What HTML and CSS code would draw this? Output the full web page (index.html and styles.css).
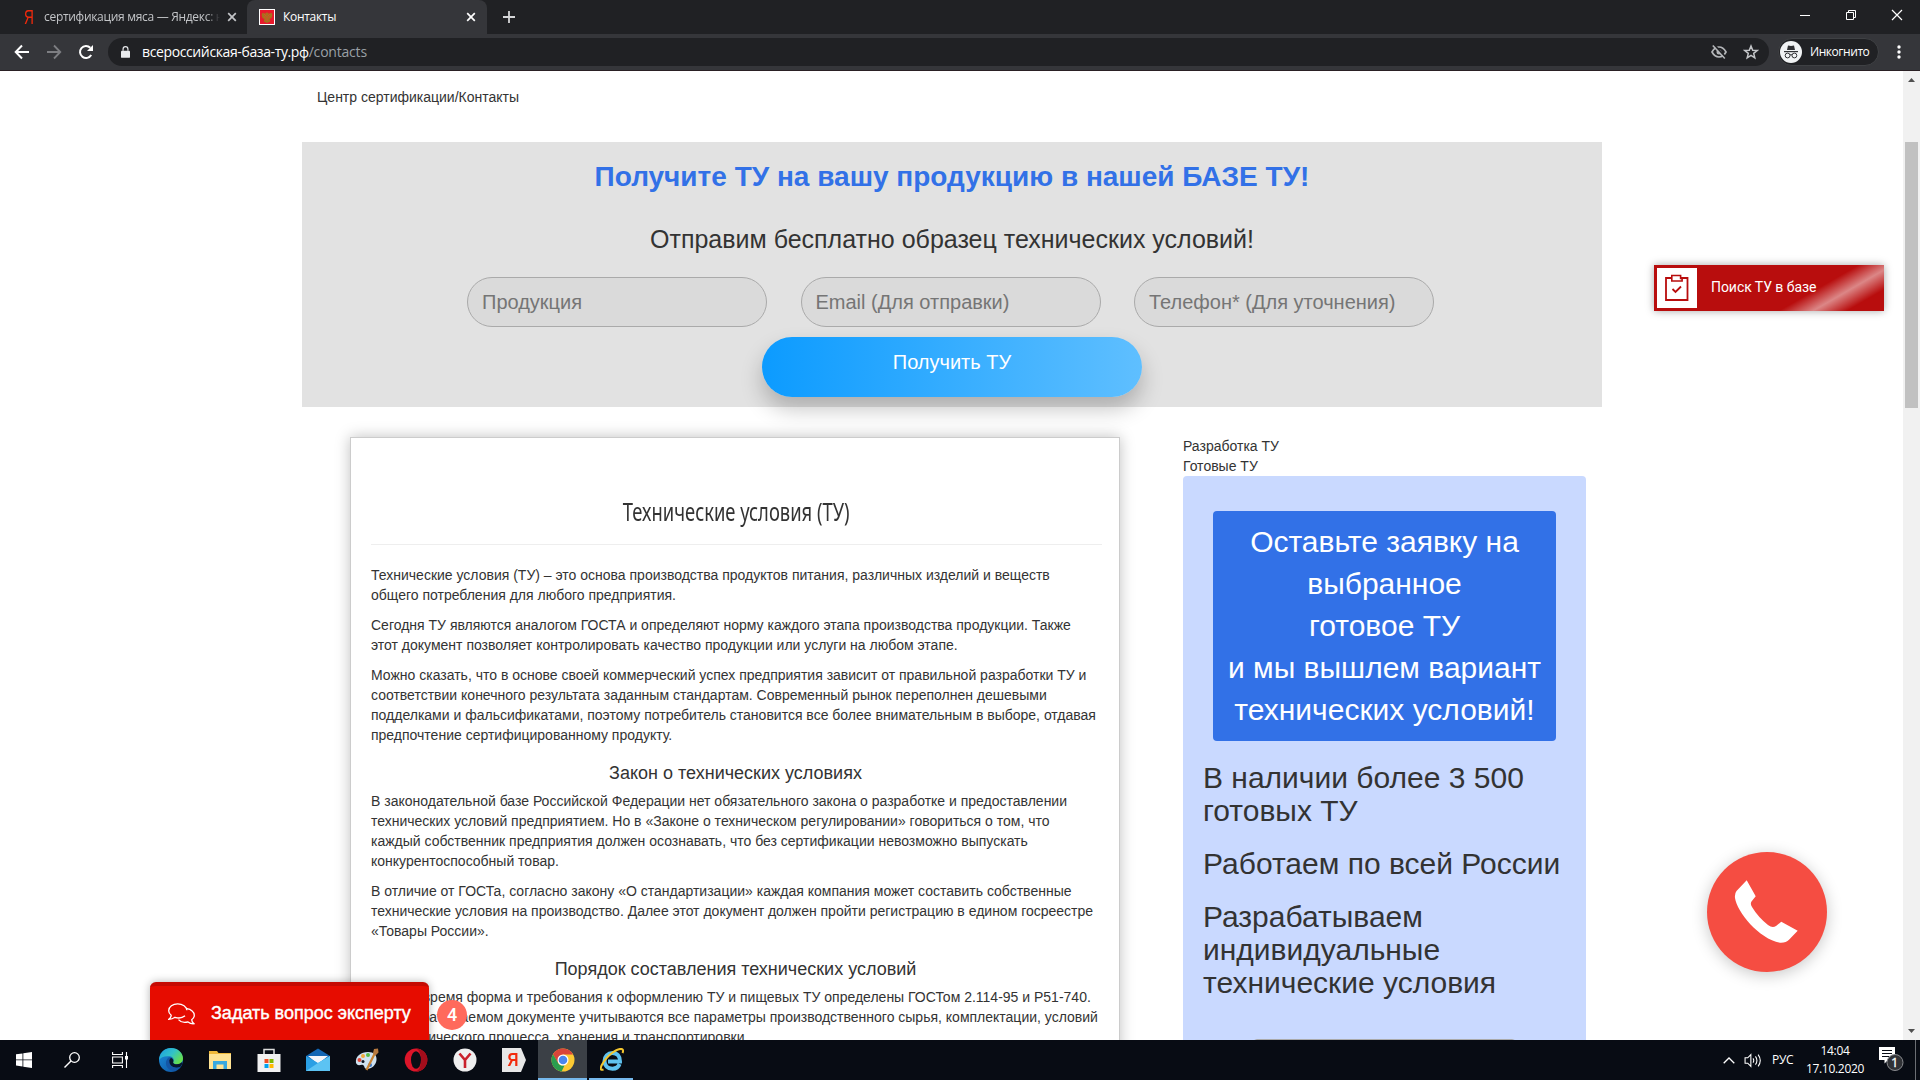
FILE: index.html
```html
<!DOCTYPE html>
<html lang="ru">
<head>
<meta charset="utf-8">
<title>Контакты</title>
<link rel="stylesheet" href="styles.css">
</head>
<body>
<div class="screen">
  <header class="tabstrip">
    <div class="tab tab-idle">
      <span class="fav-ya">Я</span>
      <span class="tab-title fade">сертификация мяса — Яндекс: н</span>
      <svg class="tab-x" viewBox="0 0 10 10"><path d="M1.2 1.2l7.6 7.6M8.8 1.2L1.2 8.8" stroke="#c3c5c8" stroke-width="1.7"/></svg>
    </div>
    <div class="tab tab-active">
      <svg class="fav-rf" viewBox="0 0 16 16"><path fill="#fff" d="M0 0h16v16H0z"/><path fill="#e8192c" d="M1 1h14v14H1z"/><path fill="#a8701c" d="M8 3l1.2 1.4L12.8 4l.6 2-.9 3-2 1 .8 2.4L8 14l-3.300-1.600.8-2.400-2-1-.9-3 .6-2 3.600.4z"/><path d="M5 5l2 2M11 5L9 7M8 7v5M5 8h1.500M9.500 8H11" stroke="#d5502a"/></svg>
      <span class="tab-title">Контакты</span>
      <svg class="tab-x" viewBox="0 0 10 10"><path d="M1.200 1.200l7.600 7.600M8.800 1.200L1.200 8.800" stroke="#fff" stroke-width="1.700"/></svg>
    </div>
    <svg class="newtab" viewBox="0 0 12 12"><path d="M6 0v12M0 6h12" stroke="#d5d6d8" stroke-width="1.800"/></svg>
    <div class="winbtns">
      <svg viewBox="0 0 12 12"><path d="M1 6.500h10" stroke="#fff"/></svg>
      <svg viewBox="0 0 12 12"><path d="M1.500 3.500h7v7h-7zM3.500 3.500v-2h7v7h-2" fill="none" stroke="#fff"/></svg>
      <svg viewBox="0 0 12 12"><path d="M1 1l10 10M11 1L1 11" stroke="#fff" stroke-width="1.200"/></svg>
    </div>
  </header>
  <div class="toolbar">
    <svg class="nav" viewBox="0 0 16 16"><path d="M15 8H2M8 1.500L1.700 8 8 14.500" fill="none" stroke="#fff" stroke-width="2"/></svg>
    <svg class="nav" viewBox="0 0 16 16"><path d="M1 8h13M8 1.500L14.300 8 8 14.500" fill="none" stroke="#7d7e82" stroke-width="1.800"/></svg>
    <svg class="nav" viewBox="0 0 16 16"><path d="M13.200 11A6 6 0 1 1 12.300 3.800" fill="none" stroke="#fff" stroke-width="2"/><path d="M15 1v6H9z" fill="#fff"/></svg>
    <div class="omnibox">
      <svg class="lock" viewBox="0 0 10 13"><path d="M1 5h8a1 1 0 0 1 1 1v6a1 1 0 0 1-1 1H1a1 1 0 0 1-1-1V6a1 1 0 0 1 1-1z" fill="#e8eaed"/><path d="M2.300 5V3.300a2.700 2.700 0 0 1 5.400 0V5" fill="none" stroke="#e8eaed" stroke-width="1.300"/></svg>
      <span class="url">всероссийская-база-ту.рф</span><span class="path">/contacts</span>
      <svg class="omni-ico first" viewBox="0 0 16 16"><path d="M1 8c2-3.600 4.500-5 7-5s5 1.400 7 5c-2 3.600-4.500 5-7 5s-5-1.400-7-5z" fill="none" stroke="#b4b6b9" stroke-width="1.700"/><circle cx="8" cy="8" r="2.500" fill="#b4b6b9"/><path d="M3 .8l12 13" stroke="#202124" stroke-width="2"/><path d="M1.800 1.500l12 13" stroke="#b4b6b9" stroke-width="1.600"/></svg>
      <svg class="omni-ico" viewBox="0 0 16 16"><path d="M8 2l1.700 4.200 4.500.3-3.500 2.900 1.100 4.400L8 11.400l-3.800 2.400 1.100-4.400L1.800 6.500l4.500-.3z" fill="none" stroke="#c4c6c9" stroke-width="1.500"/></svg>
    </div>
    <div class="chip">
      <svg viewBox="0 0 22 22"><circle cx="11" cy="11" r="11" fill="#f1f3f4"/><path d="M8 4.500l3 .5 3-.5 1 4.500H7z" fill="#303134"/><path d="M4 10.600h14" stroke="#303134" stroke-width="1.200"/><circle cx="7.600" cy="14.500" r="2.400" fill="none" stroke="#303134"/><circle cx="14.400" cy="14.500" r="2.400" fill="none" stroke="#303134"/><path d="M10 14q1-.8 2 0" fill="none" stroke="#303134"/></svg>
      <span>Инкогнито</span>
    </div>
    <svg class="dots" viewBox="0 0 4 14"><circle cx="2" cy="2" r="1.700" fill="#fff"/><circle cx="2" cy="7" r="1.700" fill="#fff"/><circle cx="2" cy="12" r="1.700" fill="#fff"/></svg>
  </div>

  <div class="viewport">
    <main class="page">
      <div class="crumbs">Центр сертификации/Контакты</div>
      <section class="lead">
        <h2>Получите ТУ на вашу продукцию в нашей БАЗЕ ТУ!</h2>
        <h3>Отправим бесплатно образец технических условий!</h3>
        <div class="fields">
          <div class="field">Продукция</div>
          <div class="field">Email (Для отправки)</div>
          <div class="field">Телефон* (Для уточнения)</div>
        </div>
        <div class="send">Получить ТУ</div>
      </section>
      <div class="columns">
        <article class="article">
          <h1><span>Технические условия (ТУ)</span></h1>
          <p>Технические условия (ТУ) – это основа производства продуктов питания, различных изделий и веществ<br>общего потребления для любого предприятия.</p>
          <p>Сегодня ТУ являются аналогом ГОСТА и определяют норму каждого этапа производства продукции. Также<br>этот документ позволяет контролировать качество продукции или услуги на любом этапе.</p>
          <p>Можно сказать, что в основе своей коммерческий успех предприятия зависит от правильной разработки ТУ и соответствии конечного результата заданным стандартам. Современный рынок переполнен дешевыми подделками и фальсификатами, поэтому потребитель становится все более внимательным в выборе, отдавая предпочтение сертифицированному продукту.</p>
          <h4>Закон о технических условиях</h4>
          <p>В законодательной базе Российской Федерации нет обязательного закона о разработке и предоставлении технических условий предприятием. Но в «Законе о техническом регулировании» говориться о том, что каждый собственник предприятия должен осознавать, что без сертификации невозможно выпускать конкурентоспособный товар.</p>
          <p>В отличие от ГОСТа, согласно закону «О стандартизации» каждая компания может составить собственные технические условия на производство. Далее этот документ должен пройти регистрацию в едином госреестре «Товары России».</p>
          <h4>Порядок составления технических условий</h4>
          <p>В наше время форма и требования к оформлению ТУ и пищевых ТУ определены ГОСТом 2.114-95 и Р51-740.<br>В разрабатываемом документе учитываются все параметры производственного сырья, комплектации, условий<br>технологического процесса, хранения и транспортировки.</p>
        </article>
        <aside class="side">
          <div>Разработка ТУ</div>
          <div>Готовые ТУ</div>
          <div class="promo">
            <div class="promo-head">Оставьте заявку на выбранное<br>готовое ТУ<br>и мы вышлем вариант технических условий!</div>
            <p>В наличии более 3 500 готовых ТУ</p>
            <p>Работаем по всей России</p>
            <p>Разрабатываем индивидуальные технические условия</p>
            <div class="promo-input"></div>
          </div>
        </aside>
      </div>
    </main>
    <div class="scrollbar">
      <svg viewBox="0 0 7 4"><path d="M0 4L3.500 0 7 4z" fill="#505050"/></svg>
      <div class="thumb"></div>
      <svg class="down" viewBox="0 0 7 4"><path d="M0 0l3.500 4L7 0z" fill="#505050"/></svg>
    </div>

    <div class="find">
      <div class="find-ico"><svg viewBox="0 0 26 28"><path d="M7 4H2v22h21.500V4H17" fill="none" stroke="#b80d0d" stroke-width="1.800"/><path d="M7.800 7V1.500h8.800v3h1.500V7z" fill="none" stroke="#b80d0d" stroke-width="1.600"/><path d="M8.500 15l3 3 5.500-5.500" fill="none" stroke="#b80d0d" stroke-width="1.800"/></svg></div>
      <span>Поиск ТУ в базе</span>
    </div>
    <div class="call"><svg viewBox="0 0 120 120"><path fill="#fff" d="M39.700 28.300L48.700 44.300 44.500 49.500Q43 52 45 55Q51 65 61 73Q65.500 76.500 69 74L74.300 69.700 90.700 78.700 82 87.800Q79 91 73 90.700C52 87 30 60 28 46Q27.500 41.500 29.500 39z"/></svg></div>
    <div class="chat">
      <svg viewBox="0 0 27 22"><path d="M17 12.700C14.500 14.800 10.500 15.500 7 14.300 5.300 15.600 3 16.300.8 16.300 2.300 15 3.200 13.600 3.200 12.200 1.500 10.900.7 9.300.7 7.700.7 3.800 4.800.8 9.700.8s9 2.900 9.200 6.500" fill="none" stroke="#fff" stroke-width="1.300"/><path d="M19 5.700c4 .6 7.300 3.300 7.300 6.500 0 1.800-1 3.400-2.600 4.600 0 1.500.8 2.700 2.300 3.900-2.200.2-4.200-.4-6-1.800-3.600 1-7.500 0-9.500-2.300" fill="none" stroke="#fff" stroke-width="1.300"/></svg>
      <span>Задать вопрос эксперту</span>
    </div>
    <div class="badge">4</div>
  </div>

  <footer class="taskbar">
    <div class="tb sys"><svg viewBox="0 0 16 16"><path fill="#fff" d="M0 2.300l6.500-.9v6H0zM7.300 1.300L16 0v7.400H7.300zM0 8.300h6.500v6.200L0 13.600zM7.300 8.300H16V16l-8.700-1.300z"/></svg></div>
    <div class="tb sys"><svg viewBox="0 0 16 16"><circle cx="10.500" cy="5.500" r="4.800" fill="none" stroke="#fff" stroke-width="1.300"/><path d="M7 9L.5 15.500" stroke="#fff" stroke-width="1.400"/></svg></div>
    <div class="tb sys"><svg viewBox="0 0 16 16"><path d="M.6 0v2.500h9.800V0M.6 16v-2.500h9.800V16M.6 5h9.800v6H.6zM14.500 0v16" fill="none" stroke="#fff" stroke-width="1.100"/><path fill="#fff" d="M13 4h3v3.500h-3z"/></svg></div>
    <div class="tb"><svg viewBox="0 0 24 24"><defs><linearGradient id="eg" x2="1" y2=".6"><stop offset="0" stop-color="#1b9de2"/><stop offset=".55" stop-color="#32c2c8"/><stop offset="1" stop-color="#66e04c"/></linearGradient><linearGradient id="eb" y2="1"><stop stop-color="#1c8fdc"/><stop offset="1" stop-color="#0c4f9e"/></linearGradient></defs><circle cx="12" cy="12" r="12" fill="url(#eb)"/><path d="M.3 10C1.500 4 6 0 12 0c7 0 12 5 12 10.300 0 4-3 6-6 6-2.500 0-4.500-.8-4-2 1.600-2.300.4-5.500-3.500-6C5.500 7.800 1.500 9 .3 12z" fill="url(#eg)"/><path d="M14.200 14.200c-.4 1.200 1.500 2.100 3.800 2.100 1.800 0 3.500-.8 4.800-2l.7 1.200-2.300 3.600C17 21 10 19 9.500 14c0-2 1-3.500 2.500-4.300 2.300 1 2.900 3 2.200 4.500z" fill="#07182e"/><path d="M9 10c-4 4-2 11.500 4.500 12.800 3.500 0 6.500-1.700 8-4-4 2-10 .5-11-4.300Q10 11 12 9.500 10 9 9 10z" fill="#1456a5"/></svg></div>
    <div class="tb"><svg viewBox="0 0 24 24"><path fill="#f0b93a" d="M1 3h8l1.500 2H23v3H1z"/><path fill="#ffe394" d="M1 6h22v15H1z"/><path fill="#38a9e0" d="M5 13h14v8h-3.500v-4.500h-7V21H5z"/></svg></div>
    <div class="tb"><svg viewBox="0 0 24 24"><path d="M7 7V1.500h10V7" fill="none" stroke="#ddd" stroke-width="1.500"/><path fill="#f1f1f1" d="M.5 6h23v18H.500z"/><path fill="#f25022" d="M7.500 11h4v4h-4z"/><path fill="#7fba00" d="M12.500 11h4v4h-4z"/><path fill="#00a4ef" d="M7.500 16h4v4h-4z"/><path fill="#ffb900" d="M12.500 16h4v4h-4z"/></svg></div>
    <div class="tb"><svg viewBox="0 0 24 24"><path fill="#1266b4" d="M0 8l12-7.500L24 8v8H0z"/><path fill="#f3f6fa" d="M2 8h20l-10 8z"/><path fill="#2a9fe4" d="M0 8l12 7 12-7v15H0z"/><path fill="#5cc3f3" d="M0 23l12-8 12-7v15z"/></svg></div>
    <div class="tb"><svg viewBox="0 0 24 24"><path fill="#cfe2f0" d="M1 15C0 8 6 4 13 4c6 0 9 3 8.500 8-.4 5-5 9-9.500 9-3 0-2-3-4-4s-5 2-7-2z"/><circle cx="4.500" cy="12" r="2" fill="#e0483a"/><circle cx="8" cy="8" r="2" fill="#f0a83b"/><circle cx="13" cy="7" r="2" fill="#58b947"/><circle cx="8" cy="13.500" r="1.500" fill="#0d1520"/><circle cx="15" cy="17" r="2" fill="#3c78c8"/><path d="M11.500 22L20 5" stroke="#c98434" stroke-width="2.200"/><path fill="#b5793f" d="M18 5l1-4 4-.5.5 4-3 3z"/></svg></div>
    <div class="tb"><svg viewBox="0 0 24 24"><ellipse cx="12" cy="12" rx="11.300" ry="11.500" fill="#dc1529"/><path d="M12 .5a11.400 11.500 0 0 1 0 23q5-2 5-11.500T12 .500z" fill="#a40d1b"/><ellipse cx="12" cy="12" rx="5" ry="8.800" fill="#0a0e15"/></svg></div>
    <div class="tb"><svg viewBox="0 0 24 24"><circle cx="12" cy="12" r="11.500" fill="#efefef"/><path d="M6.500 5.500L12 12l5.500-6.500M12 12v8" fill="none" stroke="#c9202b" stroke-width="2.600"/></svg></div>
    <div class="tb"><div class="ya-tile"><svg viewBox="0 0 24 24"><path fill="#e7e7e7" d="M0 0h19l5 12-5 12H0z"/></svg><span>Я</span></div></div>
    <div class="tb on"><svg viewBox="0 0 24 24"><circle cx="12" cy="12" r="11.500" fill="#fbc933"/><path fill="#d9453a" d="M2 6.300A11.500 11.500 0 0 1 22 6.500L12 6.600 6.800 15z"/><path fill="#2a9e4f" d="M2 6.300l5.100 8.600c1.500 2.500 4 2.900 6.500 2.400l-3 6.200A11.500 11.500 0 0 1 2 6.300z"/><circle cx="12" cy="12" r="5.500" fill="#fff"/><circle cx="12" cy="12" r="4.300" fill="#4a86ee"/></svg></div>
    <div class="tb open"><svg viewBox="0 0 24 24"><path d="M19.500 16c-1 3-3.500 4.700-7 4.700-5 0-8-3.300-8-7.700s3.200-8 8-8 7.600 3.300 7.500 8.500H8" fill="none" stroke="#5fc3f0" stroke-width="4"/><path d="M3.500 21.500C-3 24 3 12 12 5 19-.4 25-.5 22.500 5" fill="none" stroke="#f3c62f" stroke-width="2"/></svg></div>
    <div class="tray">
      <svg class="chev" viewBox="0 0 12 7"><path d="M.7 6.300L6 1l5.300 5.300" fill="none" stroke="#fff" stroke-width="1.300"/></svg>
      <svg class="vol" viewBox="0 0 16 14"><path d="M.6 4.500h2.500L6 1.500v11l-2.900-3H.6z" fill="none" stroke="#fff"/><path d="M8 5q1.400 2 0 4M10.300 3.200q2.700 3.800 0 7.600M12.800 1.500q4 5.500 0 11" fill="none" stroke="#fff"/></svg>
      <span class="lang">РУС</span>
      <div class="clock"><span>14:04</span><span>17.10.2020</span></div>
      <div class="note"><svg viewBox="0 0 25 25"><path fill="#fff" d="M0 0h16v13H9l-3.500 3.500V13H0z"/><path d="M3 3.500h10M3 6.500h10M3 9.500h7" stroke="#0a0e15"/><circle cx="16" cy="15.500" r="8" fill="#303236" stroke="#8a8c90"/></svg><span>1</span></div>
      <i class="peek"></i>
    </div>
  </footer>
</div>
</body>
</html>
```
FILE: styles.css
```css
* { box-sizing: border-box; }
body { margin: 0; font: 14px/20px "Liberation Sans", Arial, sans-serif; color: #333; background: #fff; }
svg { display: block; flex: none; }
.screen { width: 1920px; height: 1080px; overflow: hidden; display: flex; flex-direction: column; }

/* browser chrome */
.tabstrip { height: 34px; flex: none; background: #202124; display: flex; align-items: center; font: 12px/16px "Open Sans", sans-serif; letter-spacing: -.3px; }
.tab { height: 34px; display: flex; align-items: center; }
.tab-idle { width: 247px; padding-left: 22px; color: #c3c5c8; }
.tab-active { width: 240px; padding-left: 12px; background: #35363a; color: #fff; border-radius: 8px 8px 0 0; }
.fav-ya { width: 12px; color: #f22a0c; font: 21px/20px "Liberation Sans", sans-serif; transform: scaleX(.65); margin-right: 10px; }
.fav-rf { width: 16px; height: 16px; margin-right: 8px; }
.tab-title { width: 183px; white-space: nowrap; overflow: hidden; }
.tab-title.fade { width: 176px; margin-right: 7px; -webkit-mask-image: linear-gradient(90deg, #000 92%, transparent 100%); mask-image: linear-gradient(90deg, #000 92%, transparent 100%); }
.tab-x { width: 10px; height: 10px; }
.newtab { width: 12px; height: 12px; margin-left: 16px; }
.winbtns { margin-left: auto; display: flex; gap: 34px; padding-right: 17px; padding-bottom: 5px; }
.winbtns svg { width: 12px; height: 12px; }
.toolbar { height: 37px; flex: none; background: #35363a; border-bottom: 1px solid #2a2024; display: flex; align-items: center; padding-left: 14px; }
.nav { width: 16px; height: 16px; margin-right: 16px; }
.omnibox { width: 1661px; height: 28px; margin-left: -2px; border-radius: 14px; background: #202124; display: flex; align-items: center; padding-left: 13px; font: 14px/20px "Open Sans", sans-serif; letter-spacing: -.38px; color: #fff; }
.lock { width: 9px; height: 12px; margin-right: 12px; }
.path { color: #9aa0a6; letter-spacing: -.2px; }
.omni-ico { width: 16px; height: 16px; margin-right: 10px; }
.omni-ico.first { margin-left: auto; margin-right: 16px; }
.chip { width: 101px; height: 28px; margin-left: 9px; border-radius: 14px; background: #202124; border: 1px solid #3f4144; display: flex; align-items: center; padding-left: 1px; gap: 8px; color: #fff; font: 12px/16px "Open Sans", sans-serif; letter-spacing: -.45px; }
.chip svg { width: 22px; height: 22px; }
.dots { width: 4px; height: 14px; margin-left: 18px; }

/* page */
.viewport { position: relative; height: 969px; flex: none; display: flex; overflow: hidden; }
.page { width: 1903px; padding: 16px 301px 0 302px; }
.crumbs { padding-left: 15px; height: 55px; }
.lead { height: 265px; background: #e2e2e2; display: flex; flex-direction: column; align-items: center; padding-top: 19px; }
.lead h2 { margin: 0; font-size: 28px; line-height: 32px; color: #3271e7; }
.lead h3 { margin: 33px 0 0; font-size: 25px; line-height: 26px; font-weight: 400; height: 51px; }
.fields { width: 967px; display: flex; justify-content: space-between; margin-right: 3px; }
.field { width: 300px; height: 50px; border: 1px solid #aaa; border-radius: 25px; background: #dadada; padding-left: 14px; font-size: 20px; line-height: 48px; color: #757575; }
.send { width: 380px; height: 60px; margin-top: 10px; flex: none; border-radius: 30px; background: linear-gradient(90deg, #0c9bff, #5fbfff); box-shadow: 0 12px 22px rgba(0,0,0,.23); color: #fff; font-size: 20px; line-height: 50px; text-align: center; }
.columns { display: flex; align-items: flex-start; padding-left: 48px; margin-top: 30px; }
.article { width: 770px; height: 760px; flex: none; border: 1px solid #ccc; box-shadow: 0 0 14px rgba(0,0,0,.25); background: #fff; padding: 57px 17px 0 20px; }
.article h1 { margin: 0 0 20px; height: 50px; border-bottom: 1px solid #eee; font: 25px/32px "Noto Sans", sans-serif; text-align: center; white-space: nowrap; }
.article h1 span { display: inline-block; transform: scaleX(.735); }
p { margin: 0 0 10px; }
h4 { margin: 18px 0 8px; padding-right: 2px; font-size: 18px; line-height: 20px; font-weight: 400; text-align: center; }
.side { width: 403px; flex: none; margin-left: 63px; margin-top: -1px; }
.promo { height: 700px; border-radius: 4px; background: #c9d9ff; padding: 35px 20px 0; font-size: 30px; line-height: 33px; }
.promo-head { width: 343px; margin: 0 0 20px 10px; padding: 10px 0; border-radius: 4px; background: #3271e7; color: #fff; line-height: 42px; text-align: center; }
.promo p { margin-bottom: 20px; }
.promo-input { height: 45px; margin: 40px 50px 0; border: 1px solid #aaa; border-radius: 4px; background: #c3d2f5; }
.scrollbar { width: 17px; background: #f1f1f1; display: flex; flex-direction: column; align-items: center; padding: 7px 0; }
.scrollbar svg { width: 7px; height: 4px; }
.thumb { width: 13px; height: 266px; margin-top: 60px; background: #c1c1c1; }
.down { margin-top: auto; }

/* floating widgets */
.find { position: absolute; left: 1654px; top: 194px; width: 230px; height: 46px; padding-left: 3px; display: flex; align-items: center; gap: 14px; background: linear-gradient(150deg, transparent 66%, rgba(255,255,255,.5) 77%, transparent 88%), #b80d0d; box-shadow: 0 0 8px rgba(0,0,0,.35); color: #fff; font: 14px/20px Roboto, sans-serif; letter-spacing: -.05px; }
.find-ico { width: 40px; height: 40px; background: #fff; display: flex; align-items: center; justify-content: center; }
.find-ico svg { width: 26px; height: 28px; }
.find span { padding-bottom: 2px; }
.call { position: absolute; left: 1707px; top: 781px; width: 120px; height: 120px; border-radius: 50%; background: #f54d42; box-shadow: 0 3px 16px rgba(0,0,0,.22); }
.chat { position: absolute; left: 150px; top: 911px; width: 279px; height: 64px; border-top: 4px solid #c50a02; border-radius: 6px 6px 0 0; background: #e60c00; box-shadow: 0 0 8px rgba(0,0,0,.3); display: flex; align-items: flex-start; padding: 17px 0 0 18px; gap: 16px; color: #fff; font-size: 18px; line-height: 20px; white-space: nowrap; -webkit-text-stroke: .4px #fff; }
.chat svg { width: 27px; height: 22px; }
.badge { position: absolute; left: 437px; top: 929px; width: 30px; height: 30px; border-radius: 50%; background: #ff6a5c; color: #fff; font: 500 18px/29px Roboto, sans-serif; text-align: center; }

/* taskbar */
.taskbar { height: 40px; flex: none; background: #080c14; display: flex; }
.tb { width: 49px; height: 40px; flex: none; display: flex; align-items: center; justify-content: center; border-bottom: 2px solid transparent; padding-top: 2px; }
.tb svg { width: 24px; height: 24px; }
.sys { width: 48px; }
.sys:nth-child(3) { margin-right: 2px; }
.sys svg { width: 16px; height: 16px; }
.on { background: #3b4046; border-color: #76b9ed; }
.open { border-image: linear-gradient(90deg, transparent 4px, #76b9ed 4px 44px, transparent 44px) 2; }
.ya-tile { display: grid; align-items: center; }
.ya-tile > * { grid-area: 1 / 1; }
.ya-tile span { color: #f22a0c; font: 700 19px/24px "Liberation Sans", sans-serif; padding-left: 4px; transform: scaleX(.8); }
.tray { margin-left: auto; display: flex; align-items: center; color: #fff; font: 12px/18px "Open Sans", sans-serif; letter-spacing: -.3px; }
.chev { width: 12px; height: 7px; margin-right: 9px; }
.vol { width: 18px; height: 15px; margin-right: 10px; }
.lang { width: 23px; }
.clock { width: 80px; display: flex; flex-direction: column; align-items: center; }
.note { display: grid; margin: 5px 11px 0 4px; }
.note > * { grid-area: 1 / 1; }
.note svg { width: 25px; height: 25px; }
.note span { font-size: 13px; line-height: 31px; padding-left: 12px; -webkit-text-stroke: .3px #fff; }
.peek { width: 5px; height: 40px; border-left: 1px solid #6b6e73; }
```
